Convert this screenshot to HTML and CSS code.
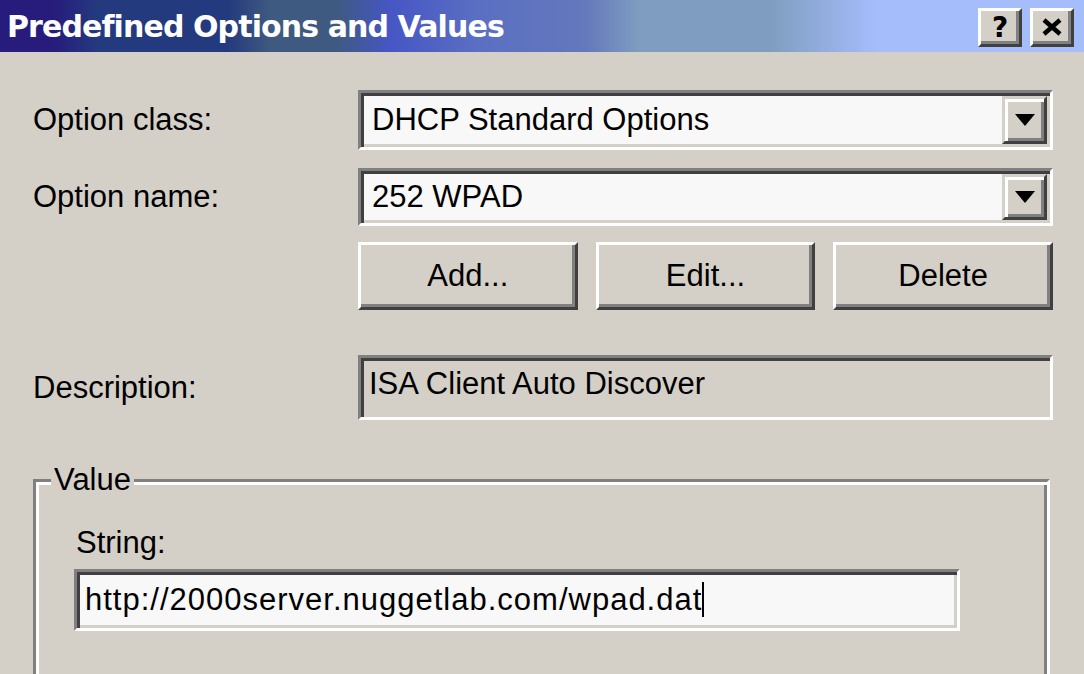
FILE: index.html
```html
<!DOCTYPE html>
<html lang="en">
<head>
  <meta charset="UTF-8" />
  <title>Predefined Options and Values</title>
  <link rel="stylesheet" href="styles.css">
</head>
<body>
  <div class="titlebar">
    <span class="title">Predefined Options and Values</span>
    <div class="caption-buttons">
      <span class="cap-btn help">?</span>
      <span class="cap-btn close">
        <svg width="22" height="18" viewBox="0 0 22 18"><path d="M3 2 L19 16 M19 2 L3 16" stroke="#000" stroke-width="4.5" fill="none"/></svg>
      </span>
    </div>
  </div>

  <div class="content">
    <div class="row row-class">
      <label>Option class:</label>
      <div class="combo">
        <span class="combo-text">DHCP Standard Options</span>
        <span class="drop"><svg width="20" height="12" viewBox="0 0 20 12"><path d="M0 0 H20 L10 12 Z" fill="#000"/></svg></span>
      </div>
    </div>

    <div class="row row-name">
      <label>Option name:</label>
      <div class="combo">
        <span class="combo-text">252 WPAD</span>
        <span class="drop"><svg width="20" height="12" viewBox="0 0 20 12"><path d="M0 0 H20 L10 12 Z" fill="#000"/></svg></span>
      </div>
    </div>

    <div class="row row-buttons">
      <span></span>
      <div class="buttons">
        <button class="btn">Add...</button>
        <button class="btn">Edit...</button>
        <button class="btn">Delete</button>
      </div>
    </div>

    <div class="row row-desc">
      <label>Description:</label>
      <div class="field readonly">ISA Client Auto Discover</div>
    </div>

    <fieldset class="group">
      <legend>Value</legend>
      <div class="string-label">String:</div>
      <div class="field input">http://2000server.nuggetlab.com/wpad.da<span class="caret">t</span></div>
    </fieldset>
  </div>
</body>
</html>
```

FILE: styles.css
```css
body {
  margin: 0;
  background: #d4d0c8;
  font-family: 'Liberation Sans', Arial, sans-serif;
  font-size: 31px;
  color: #000;
  overflow: hidden;
  height: 674px;
}
.titlebar {
  height: 52px;
  display: flex;
  align-items: center;
  justify-content: space-between;
  padding: 0 10px 0 7px;
  background: linear-gradient(to right, #271c7c 0, #271c7c 5%, #243a7e 9%, #243a7e 21%, #3f5a80 25%, #3f5a80 31%, #4656c4 36%, #5a6fc2 44%, #6478bc 54%, #7f9dc0 59%, #7f9dc0 71%, #a6bdfc 81%, #a6bdfc 100%);
}
.title {
  color: #fff;
  font-family: 'DejaVu Sans', sans-serif;
  font-weight: bold;
  font-size: 30px;
  letter-spacing: -0.9px;
}
.caption-buttons {
  display: flex;
  gap: 8px;
  margin-top: 2px;
}
.cap-btn {
  width: 44px;
  height: 39px;
  box-sizing: border-box;
  background: #d4d0c8;
  border: 3px solid;
  border-color: #fff #404040 #404040 #fff;
  box-shadow: inset -3px -3px 0 #808080;
  display: flex;
  align-items: center;
  justify-content: center;
}
.help {
  font-family: 'DejaVu Sans', sans-serif;
  font-weight: bold;
  font-size: 28px;
}
.content {
  padding: 38px 31px 0 33px;
}
.row {
  display: grid;
  grid-template-columns: 325px 695px;
  align-items: center;
}
.row-class { height: 60px; }
.row-name { height: 58px; margin-top: 18px; }
.row-buttons { height: 68px; margin-top: 16px; }
.row-desc { height: 65px; margin-top: 45px; }
.combo, .field {
  box-sizing: border-box;
  border: 3px solid;
  border-color: #808080 #fff #fff #808080;
  box-shadow: inset 3px 3px 0 #404040, inset -3px -3px 0 #d4d0c8;
}
.combo {
  height: 100%;
  background: #f8f8f8;
  display: flex;
  align-items: center;
  justify-content: space-between;
  padding: 3px 3px 3px 11px;
}
.drop {
  width: 45px;
  height: 100%;
  box-sizing: border-box;
  background: #d4d0c8;
  border: 3px solid;
  border-color: #d4d0c8 #404040 #404040 #d4d0c8;
  box-shadow: inset 3px 3px 0 #fff, inset -3px -3px 0 #808080;
  display: flex;
  align-items: center;
  justify-content: center;
}
.buttons {
  display: grid;
  grid-template-columns: repeat(3, 1fr);
  gap: 18px;
  height: 100%;
}
.btn {
  font: inherit;
  color: #000;
  background: #d4d0c8;
  border: 3px solid;
  border-color: #fff #404040 #404040 #fff;
  box-shadow: inset -3px -3px 0 #808080;
  padding: 0;
}
.readonly {
  height: 100%;
  background: #d4d0c8;
  padding: 8px 8px 0;
}
.group {
  margin: 42px 0 0;
  width: 1017px;
  height: 300px;
  box-sizing: border-box;
  border: 3px solid #808080;
  border-right-color: #fff;
  border-bottom-color: #fff;
  box-shadow: inset 3px 3px 0 #fff, inset -3px -3px 0 #808080;
  padding: 0 0 0 40px;
}
.group legend {
  margin-left: -25px;
  padding: 0 3px;
  background: #d4d0c8;
  line-height: 36px;
}
.string-label {
  margin-top: 27px;
  line-height: 36px;
}
.input {
  margin-top: 8px;
  width: 886px;
  height: 62px;
  background: #f8f8f8;
  padding: 10px 8px 0;
  margin-left: -2px;
  letter-spacing: 1px;
}
.caret {
  border-right: 2px solid #000;
}
```
